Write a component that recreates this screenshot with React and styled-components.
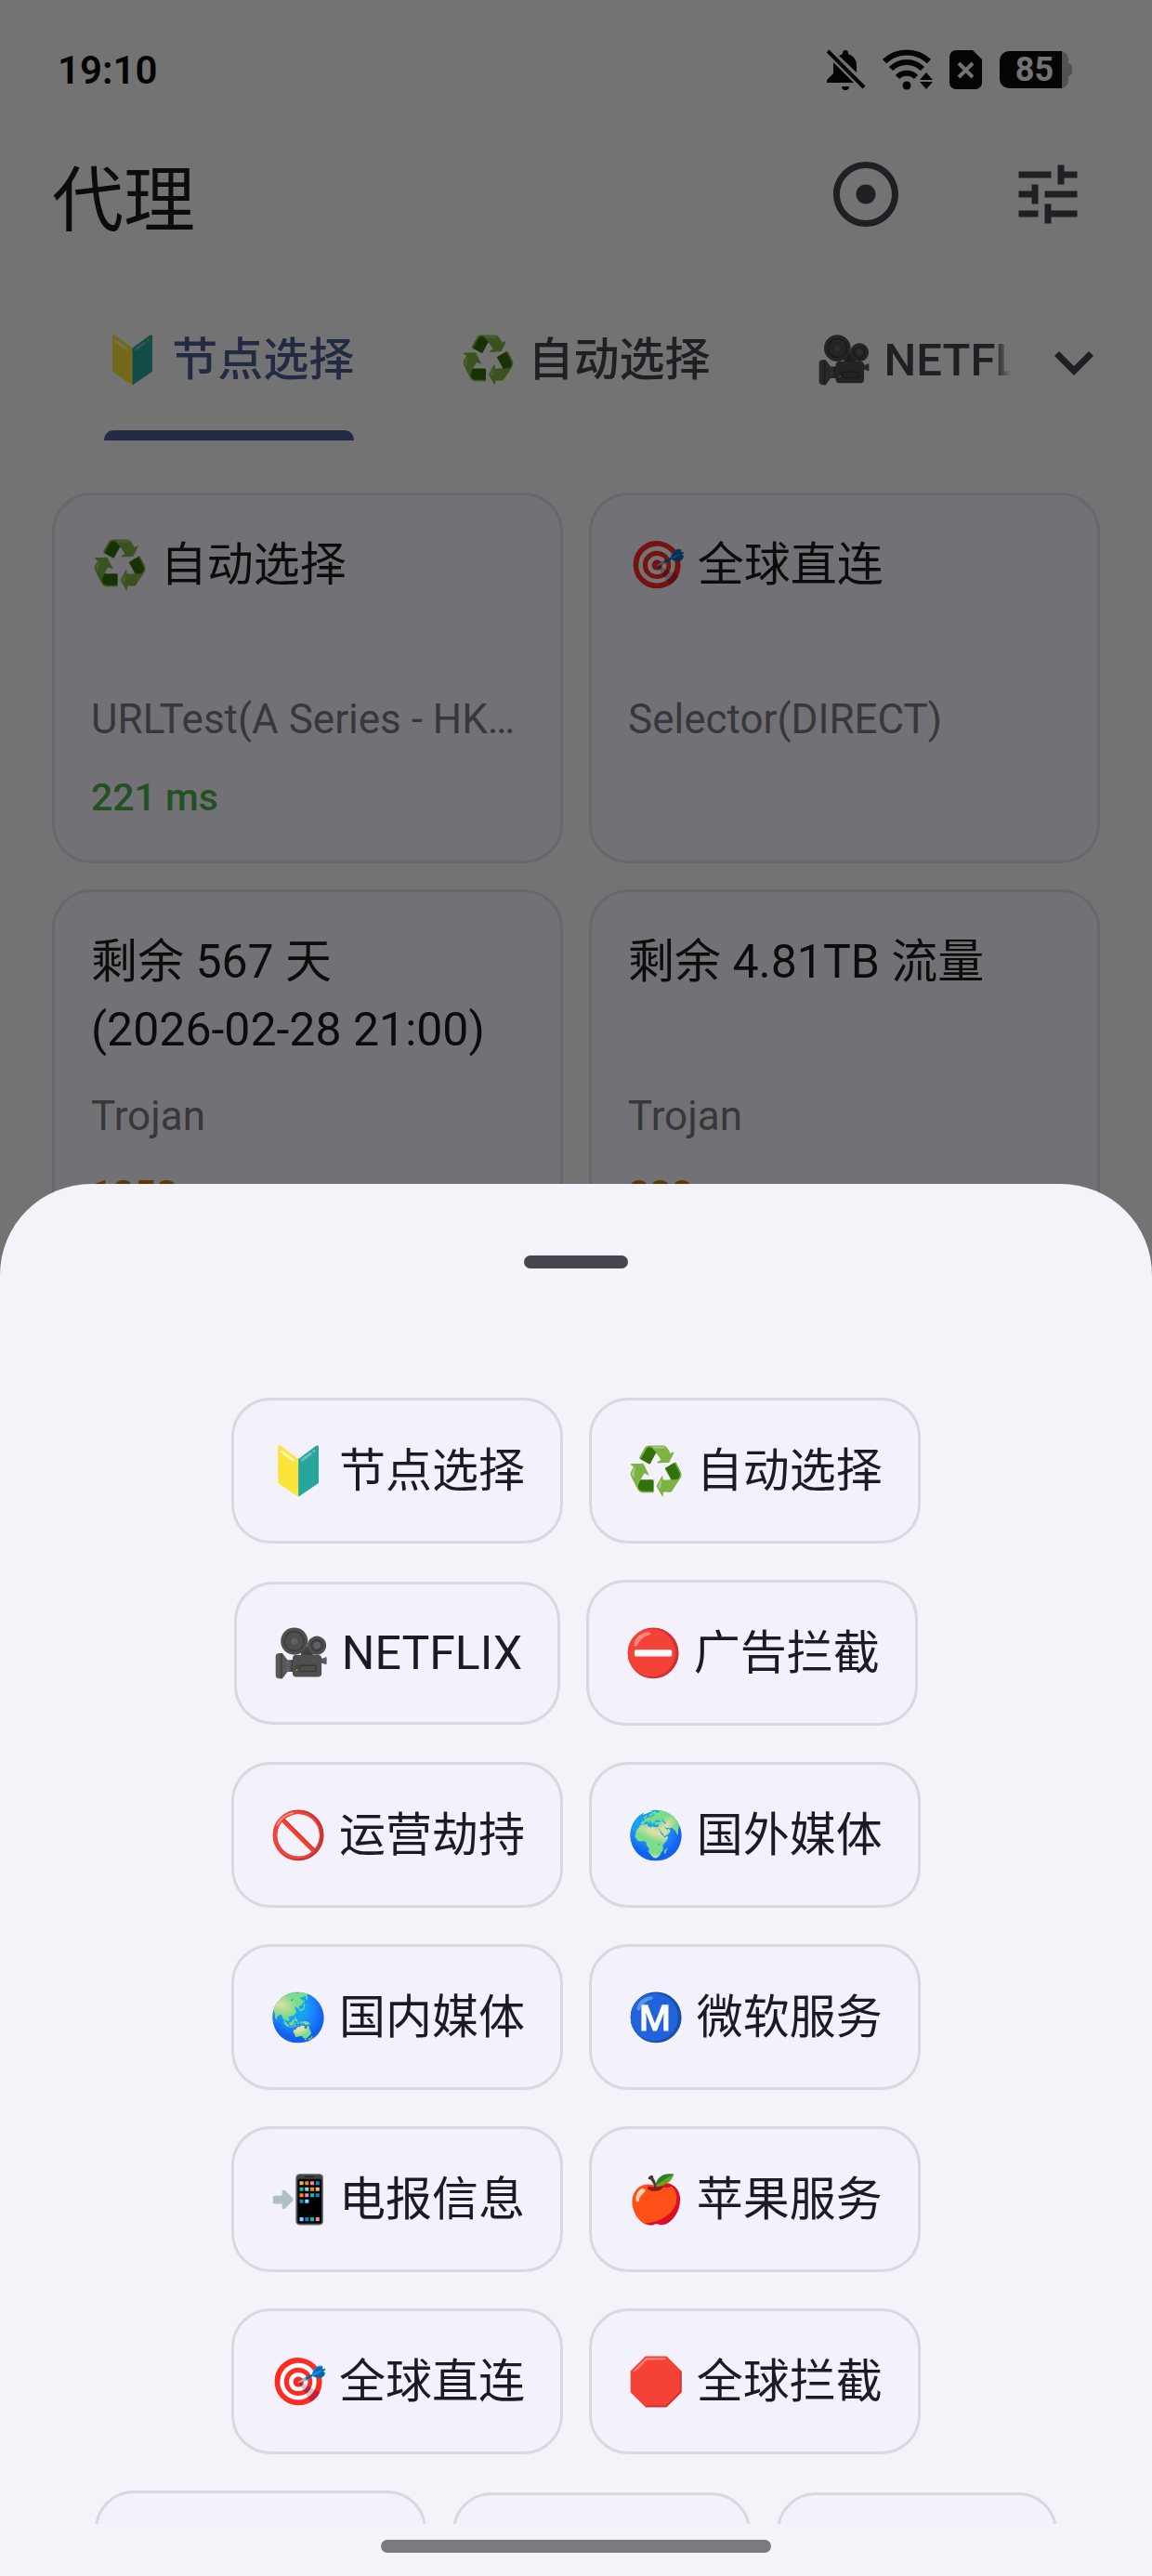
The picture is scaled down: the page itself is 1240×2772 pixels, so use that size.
import React from "react";
import styled, { createGlobalStyle } from "styled-components";
import { MdAdjust, MdTune, MdExpandMore } from "react-icons/md";

const fonts = `Roboto, "Noto Sans CJK SC", "Noto Color Emoji", sans-serif`;

const GlobalStyle = createGlobalStyle`
  * {
    box-sizing: border-box;
  }
  body {
    margin: 0;
    font-family: ${fonts};
    color: #1b1b21;
    background-color: #fafafd;
  }
  button {
    font: inherit;
    color: inherit;
    background: none;
    border: 0;
    padding: 0;
  }
`;

const Screen = styled.div`
  position: relative;
  height: 100vh;
  overflow: hidden;
`;

const StatusBar = styled.header`
  height: 150px;
  padding: 0 86px 0 62px;
  display: flex;
  align-items: center;
  justify-content: space-between;
  color: #0a0a0a;
`;

const Time = styled.span`
  font-size: 42px;
  font-weight: 600;
`;

const StatusIcons = styled.div`
  display: flex;
  align-items: center;
  gap: 18px;
`;

const Battery = styled.span`
  display: flex;
  align-items: center;
`;

const BatteryLevel = styled.span`
  width: 67px;
  height: 40px;
  padding-left: 8px;
  border-radius: 10px 0 0 10px;
  background-color: #0a0a0a;
  color: #fafafd;
  font-size: 36px;
  line-height: 40px;
  font-weight: 700;
  text-align: center;
`;

const TitleBar = styled.div`
  height: 118px;
  padding: 0 70px 0 56px;
  display: flex;
  align-items: center;
  justify-content: space-between;
`;

const Title = styled.h1`
  margin: 0;
  padding-top: 16px;
  font-size: 77px;
  line-height: 98px;
  font-weight: 400;
`;

const Actions = styled.div`
  display: flex;
  gap: 112px;
`;

const IconButton = styled.button`
  display: flex;
  font-size: 84px;
  color: #45464f;
`;

const TabBar = styled.nav`
  margin-top: 38px;
  padding: 0 42px 0 56px;
  display: flex;
  align-items: center;
  gap: 26px;
`;

const Tabs = styled.div`
  flex: 1;
  min-width: 0;
  display: flex;
  gap: 2px;
  overflow: hidden;
  mask-image: linear-gradient(
    to right,
    #000 calc(100% - 18px),
    transparent
  );
`;

const Tab = styled.button`
  flex: none;
  margin: 0 56px;
  padding-top: 6px;
  display: flex;
  flex-direction: column;
  font-size: 49px;
  line-height: 151px;
  font-weight: 500;
  white-space: nowrap;
  color: ${({ $active }) => ($active ? "#4d5c92" : "#45464f")};
  &::after {
    content: "";
    height: 11px;
    border-radius: 10px 10px 0 0;
    background-color: ${({ $active }) => ($active ? "#4d5c92" : "transparent")};
  }
`;

const Cards = styled.main`
  padding: 56px;
  display: grid;
  grid-template-columns: 1fr 1fr;
  gap: 28px;
`;

const Card = styled.button`
  min-width: 0;
  height: 399px;
  padding: 39px;
  display: flex;
  flex-direction: column;
  gap: 28px;
  border: 3px solid #e3e1e9;
  border-radius: 42px;
  background-color: #f9f7ff;
  text-align: left;
`;

const CardTitle = styled.span`
  height: 146px;
  font-size: 50px;
  line-height: 73px;
  white-space: pre-line;
`;

const CardType = styled.span`
  font-size: 44px;
  line-height: 56px;
  color: #7b7b82;
  white-space: nowrap;
`;

const Delay = styled.span`
  font-size: 41px;
  line-height: 56px;
  font-weight: 500;
  color: ${({ $slow }) => ($slow ? "#c57f0a" : "#4caf50")};
`;

const Scrim = styled.div`
  position: absolute;
  inset: 0;
  display: flex;
  flex-direction: column;
  justify-content: flex-end;
  background-color: rgba(0, 0, 0, 0.54);
`;

const Sheet = styled.section`
  padding-bottom: 25px;
  display: flex;
  flex-direction: column;
  align-items: center;
  border-radius: 98px 98px 0 0;
  background-color: #f4f3fa;
`;

const Handle = styled.div`
  width: 112px;
  height: 14px;
  margin: 77px 0;
  border-radius: 7px;
  background-color: #46464f;
`;

const ChipList = styled.div`
  width: 100%;
  max-height: 1274px;
  padding: 62px 84px;
  display: flex;
  flex-wrap: wrap;
  align-items: center;
  justify-content: center;
  gap: 39px 28px;
  overflow-y: auto;
  scrollbar-width: none;
`;

const Chip = styled.button`
  width: ${({ $width }) => ($width ? `${$width}px` : "auto")};
  height: ${({ $latin }) => ($latin ? 154 : 157)}px;
  padding: 2px 38px 0;
  display: flex;
  align-items: center;
  border: 3px solid #d9d8df;
  border-radius: 42px;
  background-color: #f3f1fb;
  font-size: 50px;
  line-height: 73px;
  white-space: nowrap;
`;

const HomeBar = styled.div`
  width: 420px;
  height: 14px;
  margin-top: 17px;
  border-radius: 7px;
  background-color: #7b7a80;
`;

const BellOffIcon = () => (
  <svg width="42" height="44" viewBox="0 0 42 44" fill="currentColor" aria-hidden="true">
    <path d="M7 14 29 36H0v-3l7-7z" />
    <path d="M13 7l4-2V4a3 3 0 0 1 6 0v1c6 2 9 7 9 12v8z" />
    <path d="M16 40h8a4 4 0 0 1-8 0z" />
    <path d="M1 2 40 41" stroke="currentColor" strokeWidth="4" />
  </svg>
);

const WifiIcon = () => (
  <svg width="54" height="44" viewBox="0 0 54 44" aria-hidden="true">
    <g fill="none" stroke="currentColor" strokeWidth="6">
      <path d="M2 13a35 35 0 0 1 48 0" />
      <path d="M9 21a24 24 0 0 1 34 0" />
      <path d="M16 30a14 14 0 0 1 20 0" />
    </g>
    <circle cx="26" cy="39" r="4.5" fill="currentColor" />
    <path d="M40 33l7-8 7 8zM40 35h14l-7 8z" fill="currentColor" />
  </svg>
);

const SimIcon = () => (
  <svg width="36" height="42" viewBox="0 0 36 42" aria-hidden="true">
    <path
      d="M7 0h18l10 10v25a7 7 0 0 1-7 7H7a7 7 0 0 1-7-7V7a7 7 0 0 1 7-7z"
      fill="currentColor"
    />
    <path d="M10 14l15 15M25 14 10 29" stroke="#fafafd" strokeWidth="4" />
  </svg>
);

const BatteryTip = () => (
  <svg width="11" height="40" viewBox="0 0 11 40" aria-hidden="true">
    <path d="M0 0c4 1 7 4 7 10v3q4 1 4 5v4q0 4-4 5v3c0 6-3 9-7 10z" fill="#b4b4b8" />
  </svg>
);

const tabs = ["🔰 节点选择", "♻️ 自动选择", "🎥 NETFLIX"];

const proxies = [
  { name: "♻️ 自动选择", type: "URLTest(A Series - HK…", delay: 221 },
  { name: "🎯 全球直连", type: "Selector(DIRECT)" },
  { name: "剩余 567 天\n(2026-02-28 21:00)", type: "Trojan", delay: 1253 },
  { name: "剩余 4.81TB 流量", type: "Trojan", delay: 838 },
];

const groups = [
  { name: "🔰 节点选择" },
  { name: "♻️ 自动选择" },
  { name: "🎥 NETFLIX", latin: true },
  { name: "⛔ 广告拦截" },
  { name: "🚫 运营劫持" },
  { name: "🌍 国外媒体" },
  { name: "🌏 国内媒体" },
  { name: "Ⓜ️ 微软服务" },
  { name: "📲 电报信息" },
  { name: "🍎 苹果服务" },
  { name: "🎯 全球直连" },
  { name: "🛑 全球拦截" },
  { width: 357 },
  { width: 321, latin: true },
  { width: 302, latin: true },
];

const App = () => {
  return (
    <Screen>
      <GlobalStyle />
      <StatusBar>
        <Time>19:10</Time>
        <StatusIcons>
          <BellOffIcon />
          <WifiIcon />
          <SimIcon />
          <Battery>
            <BatteryLevel>85</BatteryLevel>
            <BatteryTip />
          </Battery>
        </StatusIcons>
      </StatusBar>
      <TitleBar>
        <Title>代理</Title>
        <Actions>
          <IconButton aria-label="定位">
            <MdAdjust />
          </IconButton>
          <IconButton aria-label="设置">
            <MdTune />
          </IconButton>
        </Actions>
      </TitleBar>
      <TabBar>
        <Tabs>
          {tabs.map((tab, i) => (
            <Tab key={tab} $active={i === 0}>
              {tab}
            </Tab>
          ))}
        </Tabs>
        <IconButton aria-label="展开">
          <MdExpandMore />
        </IconButton>
      </TabBar>
      <Cards>
        {proxies.map(({ name, type, delay }) => (
          <Card key={name}>
            <CardTitle>{name}</CardTitle>
            <CardType>{type}</CardType>
            {!!delay && <Delay $slow={delay > 600}>{delay} ms</Delay>}
          </Card>
        ))}
      </Cards>
      <Scrim>
        <Sheet>
          <Handle />
          <ChipList>
            {groups.map(({ name, width, latin }, i) => (
              <Chip key={i} $width={width} $latin={latin}>
                {name}
              </Chip>
            ))}
          </ChipList>
          <HomeBar />
        </Sheet>
      </Scrim>
    </Screen>
  );
};

export default App;
